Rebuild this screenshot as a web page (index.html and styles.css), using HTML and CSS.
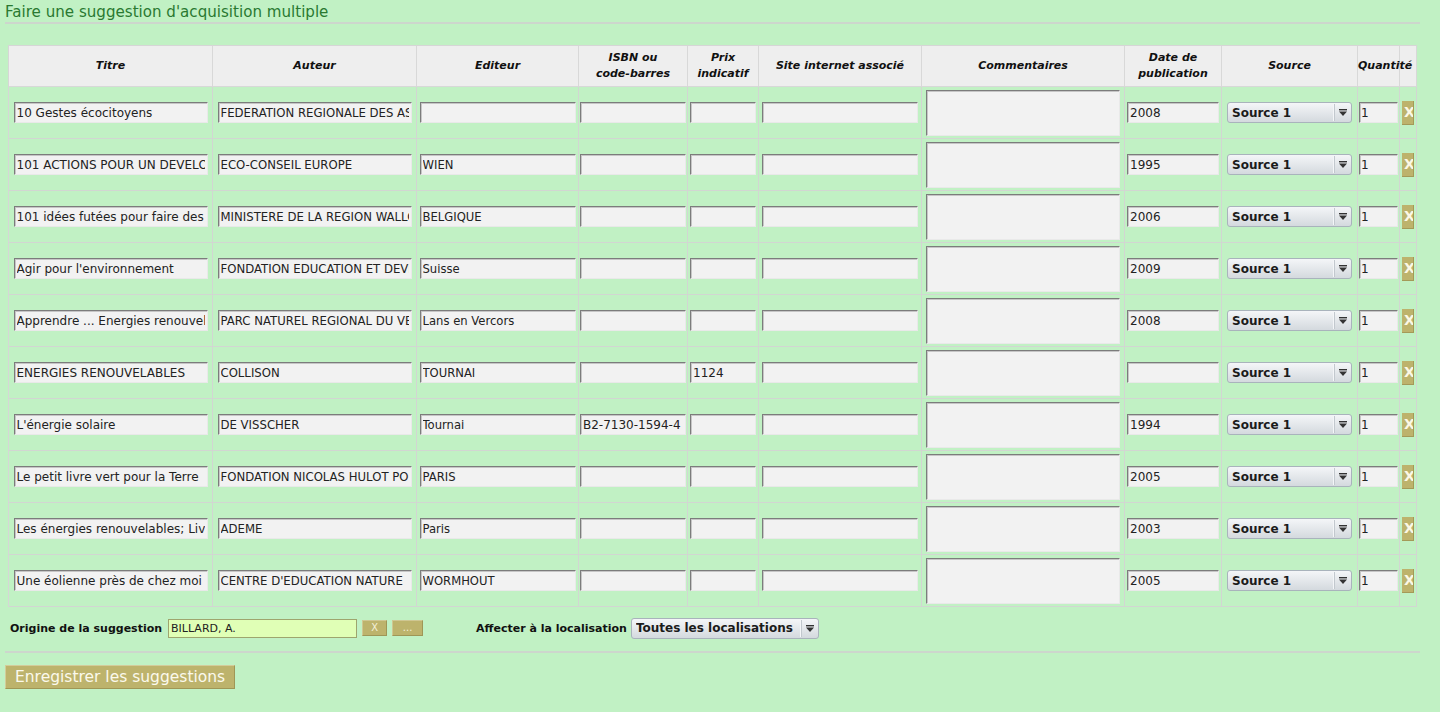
FILE: index.html
```html
<!DOCTYPE html>
<html lang="fr">
<head>
<meta charset="utf-8">
<title>Faire une suggestion d'acquisition multiple</title>
<link rel="stylesheet" href="styles.css">
</head>
<body>
<div class="page">
  <h1 class="page-title">Faire une suggestion d'acquisition multiple</h1>
  <form class="sugg-form" onsubmit="return false">
    <table class="sugg-table">
      <colgroup>
        <col class="c-titre"><col class="c-auteur"><col class="c-editeur"><col class="c-isbn"><col class="c-prix"><col class="c-site"><col class="c-comment"><col class="c-date"><col class="c-source"><col class="c-qte"><col class="c-del">
      </colgroup>
      <thead>
        <tr>
          <th>Titre</th><th>Auteur</th><th>Editeur</th><th>ISBN ou<br>code-barres</th><th>Prix<br>indicatif</th><th>Site internet associé</th><th>Commentaires</th><th>Date de<br>publication</th><th>Source</th><th>Quantité</th><th></th>
        </tr>
      </thead>
      <tbody>
        <tr>
          <td><input class="field f-titre" value="10 Gestes écocitoyens"></td>
          <td><input class="field f-auteur" value="FEDERATION REGIONALE DES ASSOCIATIONS"></td>
          <td><input class="field f-editeur" value=""></td>
          <td><input class="field f-isbn" value=""></td>
          <td><input class="field f-prix" value=""></td>
          <td><input class="field f-site" value=""></td>
          <td><textarea class="field f-comment"></textarea></td>
          <td><input class="field f-date" value="2008"></td>
          <td><span class="select-wrap"><select class="sel-source"><option>Source 1</option></select><span class="sel-arrow"><svg width="8" height="7" viewBox="0 0 8 7"><rect x="0" y="0" width="8" height="1.4" fill="#333"/><polygon points="0,2.6 8,2.6 4,7" fill="#333"/></svg></span></span></td>
          <td><input class="field f-qte" value="1"></td>
          <td><button type="button" class="del-btn">X</button></td>
        </tr>
        <tr>
          <td><input class="field f-titre" value="101 ACTIONS POUR UN DEVELOPPEMENT DURABLE"></td>
          <td><input class="field f-auteur" value="ECO-CONSEIL EUROPE"></td>
          <td><input class="field f-editeur" value="WIEN"></td>
          <td><input class="field f-isbn" value=""></td>
          <td><input class="field f-prix" value=""></td>
          <td><input class="field f-site" value=""></td>
          <td><textarea class="field f-comment"></textarea></td>
          <td><input class="field f-date" value="1995"></td>
          <td><span class="select-wrap"><select class="sel-source"><option>Source 1</option></select><span class="sel-arrow"><svg width="8" height="7" viewBox="0 0 8 7"><rect x="0" y="0" width="8" height="1.4" fill="#333"/><polygon points="0,2.6 8,2.6 4,7" fill="#333"/></svg></span></span></td>
          <td><input class="field f-qte" value="1"></td>
          <td><button type="button" class="del-btn">X</button></td>
        </tr>
        <tr>
          <td><input class="field f-titre" value="101 idées futées pour faire des économies"></td>
          <td><input class="field f-auteur" value="MINISTERE DE LA REGION WALLONNE"></td>
          <td><input class="field f-editeur" value="BELGIQUE"></td>
          <td><input class="field f-isbn" value=""></td>
          <td><input class="field f-prix" value=""></td>
          <td><input class="field f-site" value=""></td>
          <td><textarea class="field f-comment"></textarea></td>
          <td><input class="field f-date" value="2006"></td>
          <td><span class="select-wrap"><select class="sel-source"><option>Source 1</option></select><span class="sel-arrow"><svg width="8" height="7" viewBox="0 0 8 7"><rect x="0" y="0" width="8" height="1.4" fill="#333"/><polygon points="0,2.6 8,2.6 4,7" fill="#333"/></svg></span></span></td>
          <td><input class="field f-qte" value="1"></td>
          <td><button type="button" class="del-btn">X</button></td>
        </tr>
        <tr>
          <td><input class="field f-titre" value="Agir pour l'environnement"></td>
          <td><input class="field f-auteur" value="FONDATION EDUCATION ET DEVELOPPEMENT"></td>
          <td><input class="field f-editeur" value="Suisse"></td>
          <td><input class="field f-isbn" value=""></td>
          <td><input class="field f-prix" value=""></td>
          <td><input class="field f-site" value=""></td>
          <td><textarea class="field f-comment"></textarea></td>
          <td><input class="field f-date" value="2009"></td>
          <td><span class="select-wrap"><select class="sel-source"><option>Source 1</option></select><span class="sel-arrow"><svg width="8" height="7" viewBox="0 0 8 7"><rect x="0" y="0" width="8" height="1.4" fill="#333"/><polygon points="0,2.6 8,2.6 4,7" fill="#333"/></svg></span></span></td>
          <td><input class="field f-qte" value="1"></td>
          <td><button type="button" class="del-btn">X</button></td>
        </tr>
        <tr>
          <td><input class="field f-titre" value="Apprendre ... Energies renouvelables"></td>
          <td><input class="field f-auteur" value="PARC NATUREL REGIONAL DU VERCORS"></td>
          <td><input class="field f-editeur" value="Lans en Vercors"></td>
          <td><input class="field f-isbn" value=""></td>
          <td><input class="field f-prix" value=""></td>
          <td><input class="field f-site" value=""></td>
          <td><textarea class="field f-comment"></textarea></td>
          <td><input class="field f-date" value="2008"></td>
          <td><span class="select-wrap"><select class="sel-source"><option>Source 1</option></select><span class="sel-arrow"><svg width="8" height="7" viewBox="0 0 8 7"><rect x="0" y="0" width="8" height="1.4" fill="#333"/><polygon points="0,2.6 8,2.6 4,7" fill="#333"/></svg></span></span></td>
          <td><input class="field f-qte" value="1"></td>
          <td><button type="button" class="del-btn">X</button></td>
        </tr>
        <tr>
          <td><input class="field f-titre" value="ENERGIES RENOUVELABLES"></td>
          <td><input class="field f-auteur" value="COLLISON"></td>
          <td><input class="field f-editeur" value="TOURNAI"></td>
          <td><input class="field f-isbn" value=""></td>
          <td><input class="field f-prix" value="1124"></td>
          <td><input class="field f-site" value=""></td>
          <td><textarea class="field f-comment"></textarea></td>
          <td><input class="field f-date" value=""></td>
          <td><span class="select-wrap"><select class="sel-source"><option>Source 1</option></select><span class="sel-arrow"><svg width="8" height="7" viewBox="0 0 8 7"><rect x="0" y="0" width="8" height="1.4" fill="#333"/><polygon points="0,2.6 8,2.6 4,7" fill="#333"/></svg></span></span></td>
          <td><input class="field f-qte" value="1"></td>
          <td><button type="button" class="del-btn">X</button></td>
        </tr>
        <tr>
          <td><input class="field f-titre" value="L'énergie solaire"></td>
          <td><input class="field f-auteur" value="DE VISSCHER"></td>
          <td><input class="field f-editeur" value="Tournai"></td>
          <td><input class="field f-isbn" value="B2-7130-1594-4"></td>
          <td><input class="field f-prix" value=""></td>
          <td><input class="field f-site" value=""></td>
          <td><textarea class="field f-comment"></textarea></td>
          <td><input class="field f-date" value="1994"></td>
          <td><span class="select-wrap"><select class="sel-source"><option>Source 1</option></select><span class="sel-arrow"><svg width="8" height="7" viewBox="0 0 8 7"><rect x="0" y="0" width="8" height="1.4" fill="#333"/><polygon points="0,2.6 8,2.6 4,7" fill="#333"/></svg></span></span></td>
          <td><input class="field f-qte" value="1"></td>
          <td><button type="button" class="del-btn">X</button></td>
        </tr>
        <tr>
          <td><input class="field f-titre" value="Le petit livre vert pour la Terre"></td>
          <td><input class="field f-auteur" value="FONDATION NICOLAS HULOT POUR LA NATURE"></td>
          <td><input class="field f-editeur" value="PARIS"></td>
          <td><input class="field f-isbn" value=""></td>
          <td><input class="field f-prix" value=""></td>
          <td><input class="field f-site" value=""></td>
          <td><textarea class="field f-comment"></textarea></td>
          <td><input class="field f-date" value="2005"></td>
          <td><span class="select-wrap"><select class="sel-source"><option>Source 1</option></select><span class="sel-arrow"><svg width="8" height="7" viewBox="0 0 8 7"><rect x="0" y="0" width="8" height="1.4" fill="#333"/><polygon points="0,2.6 8,2.6 4,7" fill="#333"/></svg></span></span></td>
          <td><input class="field f-qte" value="1"></td>
          <td><button type="button" class="del-btn">X</button></td>
        </tr>
        <tr>
          <td><input class="field f-titre" value="Les énergies renouvelables; Livre"></td>
          <td><input class="field f-auteur" value="ADEME"></td>
          <td><input class="field f-editeur" value="Paris"></td>
          <td><input class="field f-isbn" value=""></td>
          <td><input class="field f-prix" value=""></td>
          <td><input class="field f-site" value=""></td>
          <td><textarea class="field f-comment"></textarea></td>
          <td><input class="field f-date" value="2003"></td>
          <td><span class="select-wrap"><select class="sel-source"><option>Source 1</option></select><span class="sel-arrow"><svg width="8" height="7" viewBox="0 0 8 7"><rect x="0" y="0" width="8" height="1.4" fill="#333"/><polygon points="0,2.6 8,2.6 4,7" fill="#333"/></svg></span></span></td>
          <td><input class="field f-qte" value="1"></td>
          <td><button type="button" class="del-btn">X</button></td>
        </tr>
        <tr>
          <td><input class="field f-titre" value="Une éolienne près de chez moi"></td>
          <td><input class="field f-auteur" value="CENTRE D'EDUCATION NATURE"></td>
          <td><input class="field f-editeur" value="WORMHOUT"></td>
          <td><input class="field f-isbn" value=""></td>
          <td><input class="field f-prix" value=""></td>
          <td><input class="field f-site" value=""></td>
          <td><textarea class="field f-comment"></textarea></td>
          <td><input class="field f-date" value="2005"></td>
          <td><span class="select-wrap"><select class="sel-source"><option>Source 1</option></select><span class="sel-arrow"><svg width="8" height="7" viewBox="0 0 8 7"><rect x="0" y="0" width="8" height="1.4" fill="#333"/><polygon points="0,2.6 8,2.6 4,7" fill="#333"/></svg></span></span></td>
          <td><input class="field f-qte" value="1"></td>
          <td><button type="button" class="del-btn">X</button></td>
        </tr>
      </tbody>
    </table>

    <div class="options-row">
      <label class="opt-label">Origine de la suggestion</label>
      <input class="origin-input" value="BILLARD, A.">
      <button type="button" class="small-btn btn-x">X</button>
      <button type="button" class="small-btn btn-dots">...</button>
      <label class="opt-label loc-label">Affecter à la localisation</label>
      <span class="select-wrap loc-wrap"><select class="sel-loc"><option>Toutes les localisations</option></select><span class="sel-arrow"><svg width="8" height="7" viewBox="0 0 8 7"><rect x="0" y="0" width="8" height="1.4" fill="#333"/><polygon points="0,2.6 8,2.6 4,7" fill="#333"/></svg></span></span>
    </div>

    <div class="separator"></div>

    <button type="submit" class="save-btn">Enregistrer les suggestions</button>
  </form>
</div>
</body>
</html>
```

FILE: styles.css
```css
html, body {
  margin: 0;
  padding: 0;
  background: #c1f1c4;
}

body {
  font-family: "DejaVu Sans", "Noto Sans", sans-serif;
  color: #111;
}

.page {
  padding: 0 20px 0 5px;
}

.page-title {
  margin: 0;
  padding: 3px 0 1px;
  font-size: 15.1px;
  line-height: 18px;
  font-weight: normal;
  color: #2a7931;
  border-bottom: 2px solid #cdd6cd;
}

.sugg-form {
  margin: 0;
}

.sugg-table {
  margin: 21px 0 0 3px;
  table-layout: fixed;
  width: 1409px;
  border-collapse: separate;
  border-spacing: 0;
  border-top: 1px solid #d6d6d6;
  border-left: 1px solid #d6d6d6;
}

.c-titre { width: 204px; }
.c-auteur { width: 204px; }
.c-editeur { width: 162px; }
.c-isbn { width: 109px; }
.c-prix { width: 71px; }
.c-site { width: 163px; }
.c-comment { width: 203px; }
.c-date { width: 97px; }
.c-source { width: 136px; }
.c-qte { width: 42px; }
.c-del { width: 17px; }

.sugg-table th,
.sugg-table td {
  box-sizing: border-box;
  padding: 0;
  border-right: 1px solid #d2d6d2;
  border-bottom: 1px solid #d2d6d2;
  text-align: center;
  vertical-align: middle;
}

.sugg-table th {
  height: 41px;
  background: #eeeeee;
  border-color: #d8d8d8;
  font-size: 11px;
  line-height: 16px;
  font-weight: bold;
  font-style: italic;
  white-space: nowrap;
  overflow: visible;
  color: #111;
}

.sugg-table td {
  height: 52px;
  font-size: 0;
}

.field {
  box-sizing: border-box;
  display: inline-block;
  vertical-align: middle;
  margin: 0;
  height: 21px;
  padding: 0 2px;
  background: #f2f2f2;
  border: 1px solid;
  border-color: #7c7c7c #e9e9e9 #e9e9e9 #7c7c7c;
  box-shadow: inset 1px 1px 0 #c6c6c6;
  font-family: "DejaVu Sans", sans-serif;
  font-size: 11px;
  color: #222;
  outline: none;
}

.f-titre { width: 194px; font-size: 12px; }
.f-auteur { width: 194px; font-size: 11.7px; }
.f-editeur { width: 156px; font-size: 11.6px; }
.f-isbn { width: 106px; font-size: 12px; }
.f-prix { width: 66px; font-size: 12px; }
.f-site { width: 156px; }
.f-date { width: 92px; font-size: 12px; }
.f-qte { width: 39px; font-size: 12px; padding-left: 1px; }

.f-comment {
  width: 194px;
  height: 46px;
  resize: none;
  padding: 2px;
}

.select-wrap {
  position: relative;
  display: inline-block;
  vertical-align: middle;
  font-size: 0;
}

.sel-source,
.sel-loc {
  -webkit-appearance: none;
  appearance: none;
  box-sizing: border-box;
  margin: 0;
  height: 21px;
  border: 1px solid #a9b3bc;
  border-radius: 3px;
  background: linear-gradient(#f4f6f8, #d4d9de);
  font-family: "DejaVu Sans", sans-serif;
  font-weight: bold;
  font-size: 12px;
  color: #1b1b1b;
  padding: 0 20px 0 4px;
  text-align: left;
  outline: none;
}

.sel-source { width: 125px; }

.sel-arrow {
  position: absolute;
  top: 2px;
  right: 1px;
  bottom: 2px;
  width: 16px;
  border-left: 1px solid #c2c8ce;
  box-shadow: -1px 0 0 #f4f6f8;
  display: flex;
  align-items: center;
  justify-content: center;
  pointer-events: none;
}

.del-btn {
  box-sizing: border-box;
  display: inline-block;
  vertical-align: middle;
  width: 12px;
  height: 24px;
  margin: 0;
  padding: 0 0 0 2px;
  overflow: hidden;
  text-align: left;
  background: #bdb36c;
  border: none;
  border-right: 1px solid #a49a58;
  border-bottom: 1px solid #a49a58;
  color: #fbf8e6;
  font-family: "DejaVu Sans", sans-serif;
  font-size: 14px;
  font-weight: bold;
  line-height: 22px;
  white-space: nowrap;
}

.options-row {
  display: flex;
  align-items: center;
  height: 22px;
  margin-top: 10px;
}

.opt-label {
  margin-left: 5px;
  font-size: 11px;
  font-weight: bold;
  color: #111;
  white-space: nowrap;
}

.origin-input {
  box-sizing: border-box;
  margin: 0 0 0 6px;
  width: 189px;
  height: 19px;
  padding: 0 2px;
  background: #e0ffb6;
  border: 1px solid #9ea56e;
  font-family: "DejaVu Sans", sans-serif;
  font-size: 11px;
  color: #222;
  outline: none;
}

.small-btn {
  box-sizing: border-box;
  margin: 0 0 0 5px;
  height: 16px;
  padding: 0;
  background: #bdb36c;
  border: 1px solid;
  border-color: #cfc792 #9f9656 #9f9656 #cfc792;
  color: #f3f0d8;
  font-family: "DejaVu Sans", sans-serif;
  font-size: 10px;
  line-height: 14px;
}

.btn-x { width: 25px; }
.btn-dots { width: 31px; }

.loc-label {
  margin-left: 53px;
}

.loc-wrap {
  margin-left: 4px;
}

.sel-loc {
  width: 188px;
}

.separator {
  margin-top: 12px;
  height: 2px;
  background: #cdd6cd;
}

.save-btn {
  box-sizing: border-box;
  display: block;
  margin: 12px 0 0 0;
  width: 230px;
  height: 24px;
  padding: 0 0 0 9px;
  text-align: left;
  background: #bdb36c;
  border: 1px solid;
  border-color: #d3cc9a #9f9656 #9f9656 #d3cc9a;
  color: #fbf9ec;
  font-family: "DejaVu Sans", sans-serif;
  font-size: 15.5px;
  line-height: 22px;
  white-space: nowrap;
}
```
